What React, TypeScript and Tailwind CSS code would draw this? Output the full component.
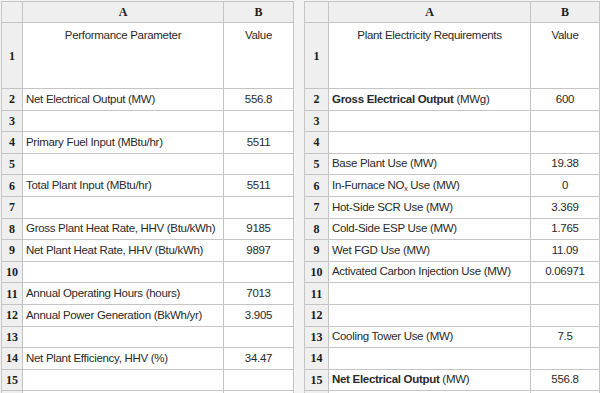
import type { ReactNode } from 'react';

type Row = { label?: ReactNode; value?: string };

const leftRows: Row[] = [
  { label: 'Net Electrical Output (MW)', value: '556.8' },
  {},
  { label: 'Primary Fuel Input (MBtu/hr)', value: '5511' },
  {},
  { label: 'Total Plant Input (MBtu/hr)', value: '5511' },
  {},
  { label: 'Gross Plant Heat Rate, HHV (Btu/kWh)', value: '9185' },
  { label: 'Net Plant Heat Rate, HHV (Btu/kWh)', value: '9897' },
  {},
  { label: 'Annual Operating Hours (hours)', value: '7013' },
  { label: 'Annual Power Generation (BkWh/yr)', value: '3.905' },
  {},
  { label: 'Net Plant Efficiency, HHV (%)', value: '34.47' },
  {},
];

const rightRows: Row[] = [
  {
    label: (
      <>
        <b>Gross Electrical Output</b> (MWg)
      </>
    ),
    value: '600',
  },
  {},
  {},
  { label: 'Base Plant Use (MW)', value: '19.38' },
  {
    label: (
      <>
        In-Furnace NO<sub className="text-[7px]">x</sub> Use (MW)
      </>
    ),
    value: '0',
  },
  { label: 'Hot-Side SCR Use (MW)', value: '3.369' },
  { label: 'Cold-Side ESP Use (MW)', value: '1.765' },
  { label: 'Wet FGD Use (MW)', value: '11.09' },
  { label: 'Activated Carbon Injection Use (MW)', value: '0.06971' },
  {},
  {},
  { label: 'Cooling Tower Use (MW)', value: '7.5' },
  {},
  {
    label: (
      <>
        <b>Net Electrical Output</b> (MW)
      </>
    ),
    value: '556.8',
  },
];

const headCell =
  "bg-[#efefef] flex items-center justify-center font-['Liberation_Serif',serif] font-bold text-[12px] tracking-normal text-[#1c1c1c]";

const Sheet = ({ title, rows, cols }: { title: string; rows: Row[]; cols: string }) => (
  <div className={`grid ${cols} gap-px bg-[#c4c4c4] p-px self-start`}>
    <div className={`h-[20px] ${headCell}`} />
    <div className={`h-[20px] ${headCell}`}>A</div>
    <div className={`h-[20px] ${headCell}`}>B</div>

    <div className={`h-[65px] ${headCell}`}>1</div>
    <div className="h-[65px] bg-white text-center pt-[4px]">{title}</div>
    <div className="h-[65px] bg-white text-center pt-[4px]">Value</div>

    {rows.map((r, i) => (
      <div key={i} className="contents">
        <div className={`h-[20.6px] ${headCell}`}>{i + 2}</div>
        <div className="h-[20.6px] bg-white flex items-center pl-[3px] whitespace-nowrap">
          <span>{r.label}</span>
        </div>
        <div className="h-[20.6px] bg-white flex items-center justify-center">{r.value}</div>
      </div>
    ))}

    {/* next row, cut off by the window */}
    <div className={`h-[20.6px] ${headCell}`} />
    <div className="h-[20.6px] bg-white" />
    <div className="h-[20.6px] bg-white" />
  </div>
);

export default function App() {
  return (
    <div className="w-[600px] h-[393px] overflow-hidden bg-[#f3f3f3] font-['Liberation_Sans',Arial,sans-serif] text-[11.5px] tracking-[-0.3px] text-[#2a2a2a]">
      <div className="flex pt-px pl-px gap-[10px]">
        <Sheet title="Performance Parameter" rows={leftRows} cols="grid-cols-[20px_200px_69px]" />
        <Sheet title="Plant Electricity Requirements" rows={rightRows} cols="grid-cols-[23px_201px_68px]" />
      </div>
    </div>
  );
}
